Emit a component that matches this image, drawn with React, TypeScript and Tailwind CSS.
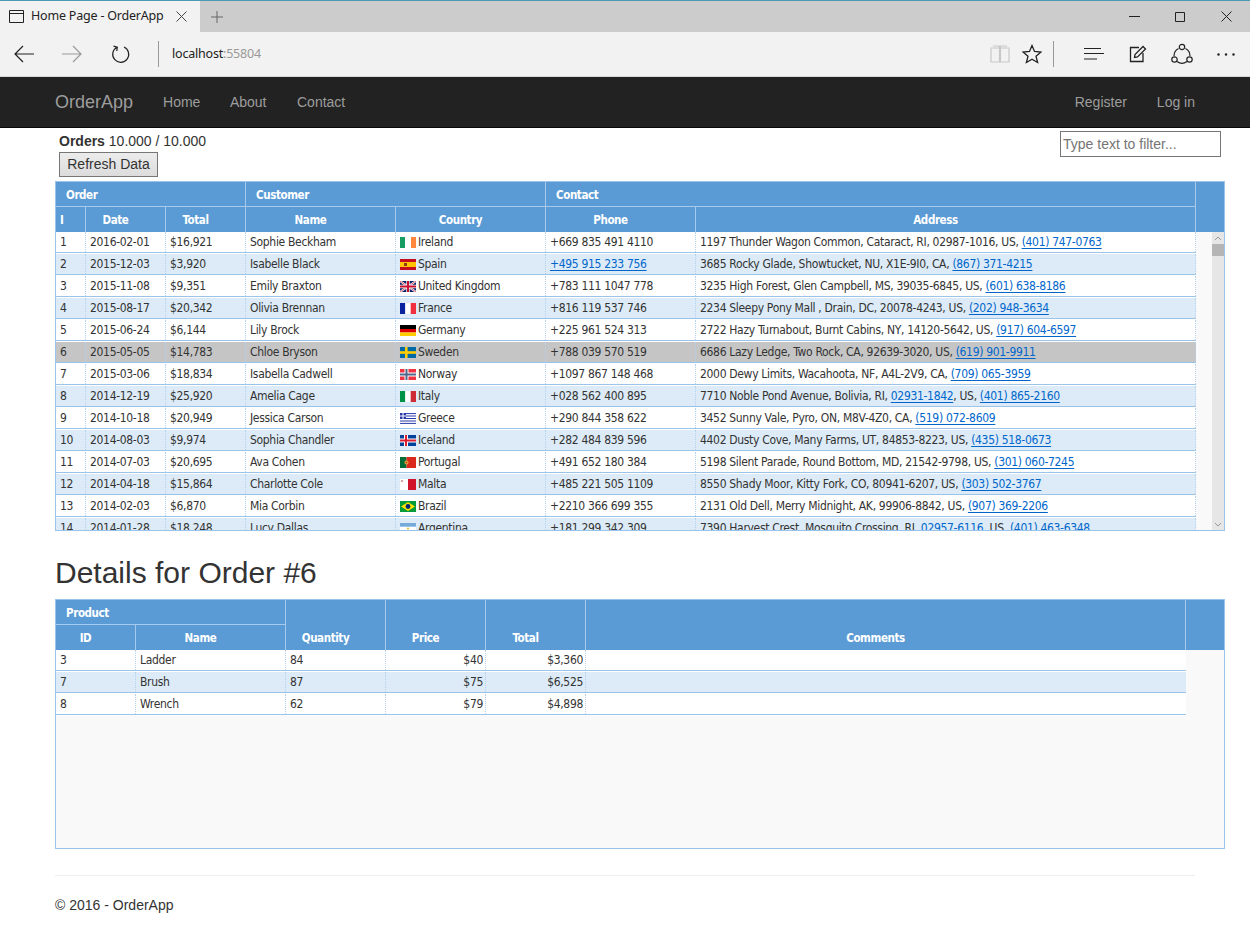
import React from 'react';

const ORDERS = [
  ['1', '2016-02-01', '$16,921', 'Sophie Beckham', 'ie', 'Ireland', '+669 835 491 4110', '1197 Thunder Wagon Common, Cataract, RI, 02987-1016, US, ', '(401) 747-0763'],
  ['2', '2015-12-03', '$3,920', 'Isabelle Black', 'es', 'Spain', '+495 915 233 756', '3685 Rocky Glade, Showtucket, NU, X1E-9I0, CA, ', '(867) 371-4215'],
  ['3', '2015-11-08', '$9,351', 'Emily Braxton', 'gb', 'United Kingdom', '+783 111 1047 778', '3235 High Forest, Glen Campbell, MS, 39035-6845, US, ', '(601) 638-8186'],
  ['4', '2015-08-17', '$20,342', 'Olivia Brennan', 'fr', 'France', '+816 119 537 746', '2234 Sleepy Pony Mall , Drain, DC, 20078-4243, US, ', '(202) 948-3634'],
  ['5', '2015-06-24', '$6,144', 'Lily Brock', 'de', 'Germany', '+225 961 524 313', '2722 Hazy Turnabout, Burnt Cabins, NY, 14120-5642, US, ', '(917) 604-6597'],
  ['6', '2015-05-05', '$14,783', 'Chloe Bryson', 'se', 'Sweden', '+788 039 570 519', '6686 Lazy Ledge, Two Rock, CA, 92639-3020, US, ', '(619) 901-9911'],
  ['7', '2015-03-06', '$18,834', 'Isabella Cadwell', 'no', 'Norway', '+1097 867 148 468', '2000 Dewy Limits, Wacahoota, NF, A4L-2V9, CA, ', '(709) 065-3959'],
  ['8', '2014-12-19', '$25,920', 'Amelia Cage', 'it', 'Italy', '+028 562 400 895', '7710 Noble Pond Avenue, Bolivia, RI, ', '02931-1842', ', US, ', '(401) 865-2160'],
  ['9', '2014-10-18', '$20,949', 'Jessica Carson', 'gr', 'Greece', '+290 844 358 622', '3452 Sunny Vale, Pyro, ON, M8V-4Z0, CA, ', '(519) 072-8609'],
  ['10', '2014-08-03', '$9,974', 'Sophia Chandler', 'is', 'Iceland', '+282 484 839 596', '4402 Dusty Cove, Many Farms, UT, 84853-8223, US, ', '(435) 518-0673'],
  ['11', '2014-07-03', '$20,695', 'Ava Cohen', 'pt', 'Portugal', '+491 652 180 384', '5198 Silent Parade, Round Bottom, MD, 21542-9798, US, ', '(301) 060-7245'],
  ['12', '2014-04-18', '$15,864', 'Charlotte Cole', 'mt', 'Malta', '+485 221 505 1109', '8550 Shady Moor, Kitty Fork, CO, 80941-6207, US, ', '(303) 502-3767'],
  ['13', '2014-02-03', '$6,870', 'Mia Corbin', 'br', 'Brazil', '+2210 366 699 355', '2131 Old Dell, Merry Midnight, AK, 99906-8842, US, ', '(907) 369-2206'],
  ['14', '2014-01-28', '$18,248', 'Lucy Dallas', 'ar', 'Argentina', '+181 299 342 309', '7390 Harvest Crest, Mosquito Crossing, RI, ', '02957-6116', ', US, ', '(401) 463-6348'],
];

const DETAILS = [
  ['3', 'Ladder', '84', '$40', '$3,360'],
  ['7', 'Brush', '87', '$75', '$6,525'],
  ['8', 'Wrench', '62', '$79', '$4,898'],
];

function Flag({ code }: { code: string }) {
  const body: Record<string, React.ReactNode> = {
    ie: <><rect width="5" height="11" fill="#169b62" /><rect x="5" width="6" height="11" fill="#fff" /><rect x="11" width="5" height="11" fill="#ff883e" /></>,
    es: <><rect width="16" height="11" fill="#c60b1e" /><rect y="3" width="16" height="5" fill="#ffc400" /><rect x="4" y="4" width="3" height="3" fill="#8d3a1a" /></>,
    gb: <><rect width="16" height="11" fill="#012169" /><path d="M0 0L16 11M16 0L0 11" stroke="#fff" strokeWidth="2" /><path d="M0 0L16 11M16 0L0 11" stroke="#c8102e" strokeWidth="0.7" /><path d="M8 0V11M0 5.5H16" stroke="#fff" strokeWidth="3.4" /><path d="M8 0V11M0 5.5H16" stroke="#c8102e" strokeWidth="2" /></>,
    fr: <><rect width="5.3" height="11" fill="#0a239e" /><rect x="5.3" width="5.4" height="11" fill="#fff" /><rect x="10.7" width="5.3" height="11" fill="#f0303f" /></>,
    de: <><rect width="16" height="4" fill="#000" /><rect y="4" width="16" height="3.5" fill="#dd0000" /><rect y="7.5" width="16" height="3.5" fill="#ffce00" /></>,
    se: <><rect width="16" height="11" fill="#006aa7" /><rect x="5" width="2.6" height="11" fill="#fecc00" /><rect y="4.2" width="16" height="2.6" fill="#fecc00" /></>,
    no: <><rect width="16" height="11" fill="#ef3340" /><rect x="4.5" width="4" height="11" fill="#fff" /><rect y="3.5" width="16" height="4" fill="#fff" /><rect x="5.5" width="2" height="11" fill="#53668c" /><rect y="4.5" width="16" height="2" fill="#53668c" /></>,
    it: <><rect width="5.3" height="11" fill="#009246" /><rect x="5.3" width="5.4" height="11" fill="#fff" /><rect x="10.7" width="5.3" height="11" fill="#ce2b37" /></>,
    gr: <><rect width="16" height="11" fill="#fff" /><path d="M0 .6H16M0 3H16M0 5.5H16M0 8H16M0 10.4H16" stroke="#2a3aa8" /><rect width="6" height="6" fill="#2a3aa8" /><path d="M3 0V6M0 3H6" stroke="#fff" /></>,
    is: <><rect width="16" height="11" fill="#02429b" /><rect x="4" width="4" height="11" fill="#fff" /><rect y="3.5" width="16" height="4" fill="#fff" /><rect x="5" width="2" height="11" fill="#dc1e35" /><rect y="4.5" width="16" height="2" fill="#dc1e35" /></>,
    pt: <><rect width="6.5" height="11" fill="#046a38" /><rect x="6.5" width="9.5" height="11" fill="#da291c" /><circle cx="6.5" cy="5.5" r="2" fill="#e8b33a" /><circle cx="6.5" cy="5.5" r="1" fill="#c0392b" /></>,
    mt: <><rect width="8" height="11" fill="#fff" /><rect x="8" width="8" height="11" fill="#cf142b" /><rect x="1" y="1" width="2" height="2" fill="#d8a0a0" /></>,
    br: <><rect width="16" height="11" fill="#009b3a" /><path d="M8 1L15 5.5L8 10L1 5.5Z" fill="#fedf00" /><circle cx="8" cy="5.5" r="2.4" fill="#002776" /></>,
    ar: <><rect width="16" height="11" fill="#75aadb" /><rect y="3.7" width="16" height="3.6" fill="#fff" /><circle cx="8" cy="5.5" r="1" fill="#f6b40e" /></>,
  };
  return (
    <svg width="16" height="11" viewBox="0 0 16 11" className="shrink-0">
      {body[code]}
    </svg>
  );
}

function Phone({ children }: { children: React.ReactNode }) {
  return <span className="text-[#0066cc] underline underline-offset-2">{children}</span>;
}

// cell of a data row, dotted divider on the right
function Cell({ className, children }: { className: string; children?: React.ReactNode }) {
  return (
    <div className={`${className} h-full flex items-center pl-[4px] pr-[2px] border-r border-dotted border-[#b4d2ee] whitespace-nowrap overflow-hidden`}>
      {children}
    </div>
  );
}

const headText = 'font-bold text-white text-[11.5px] tracking-[-0.4px]';

function Head({ className, children }: { className: string; children?: React.ReactNode }) {
  return (
    <div className={`${className} h-full flex items-center justify-center pr-[20px] pt-[3px] border-r border-[#a6c9ec] ${headText}`}>
      {children}
    </div>
  );
}

function Group({ className, children }: { className: string; children?: React.ReactNode }) {
  return (
    <div className={`${className} h-full flex items-center pl-[10px] pt-[3px] border-r border-b border-[#a6c9ec] ${headText}`}>
      {children}
    </div>
  );
}

function HeadLow({ className, children }: { className: string; children?: React.ReactNode }) {
  return (
    <div className={`${className} h-full flex flex-col justify-end items-center pr-[20px] pb-[3px] border-r border-[#a6c9ec] ${headText}`}>
      {children}
    </div>
  );
}

function rowBg(i: number, selected: boolean) {
  if (selected) return 'bg-[#c5c5c5]';
  return i % 2 === 1 ? 'bg-[#dcebf7]' : 'bg-white';
}

const gridFont = "text-[12px] tracking-[-0.32px] text-[#333] font-['DejaVu_Sans',sans-serif] font-stretch-condensed";

function OrdersGrid() {
  return (
    <div className={`w-[1170px] h-[350px] border border-[#9cc3e8] overflow-hidden bg-[#f9f9f9] ${gridFont}`}>
      <div className="bg-[#5b9bd5]">
        <div className="h-[25px] flex">
          <Group className="w-[190px]">Order</Group>
          <Group className="w-[300px]">Customer</Group>
          <Group className="w-[650px]">Contact</Group>
        </div>
        <div className="h-[25px] flex">
          <div className={`w-[30px] h-full flex items-center pl-1 pt-[3px] border-r border-[#a6c9ec] ${headText}`}>I</div>
          <Head className="w-[80px]">Date</Head>
          <Head className="w-[80px]">Total</Head>
          <Head className="w-[150px]">Name</Head>
          <Head className="w-[150px]">Country</Head>
          <Head className="w-[150px]">Phone</Head>
          <Head className="w-[500px]">Address</Head>
        </div>
      </div>
      <div className="flex h-[298px] overflow-hidden">
        <div className="w-[1140px] shrink-0">
          {ORDERS.map((o, i) => (
            <div key={o[0]} className="h-[22px] bg-white">
              <div className={`h-[21px] flex border-b border-[#9cc3e8] ${rowBg(i, o[0] === '6')}`}>
                <Cell className="w-[30px]">{o[0]}</Cell>
                <Cell className="w-[80px]">{o[1]}</Cell>
                <Cell className="w-[80px]">{o[2]}</Cell>
                <Cell className="w-[150px]">{o[3]}</Cell>
                <Cell className="w-[150px]">
                  <Flag code={o[4]} />
                  <span className="ml-[2px]">{o[5]}</span>
                </Cell>
                <Cell className="w-[150px]">{o[0] === '2' ? <Phone>{o[6]}</Phone> : o[6]}</Cell>
                <Cell className="w-[500px]">
                  <span className="whitespace-pre">{o[7]}</span>
                  <Phone>{o[8]}</Phone>
                  {o[9] && <span className="whitespace-pre">{o[9]}</span>}
                  {o[10] && <Phone>{o[10]}</Phone>}
                </Cell>
              </div>
            </div>
          ))}
        </div>
        <div className="w-[12px] ml-auto bg-[#e6e6e6] flex flex-col items-center justify-between">
          <div className="w-full">
            <div className="h-3 flex items-center justify-center">
              <svg width="8" height="5" viewBox="0 0 8 5" fill="none" stroke="#9a9a9a"><path d="M1 4L4 1L7 4" /></svg>
            </div>
            <div className="h-3 bg-[#b5b5b5]" />
          </div>
          <div className="h-3 w-full flex items-center justify-center">
            <svg width="8" height="5" viewBox="0 0 8 5" fill="none" stroke="#9a9a9a"><path d="M1 1L4 4L7 1" /></svg>
          </div>
        </div>
      </div>
    </div>
  );
}

function DetailsGrid() {
  return (
    <div className={`w-[1170px] h-[250px] border border-[#9cc3e8] bg-[#f9f9f9] ${gridFont}`}>
      <div className="h-[50px] flex bg-[#5b9bd5]">
        <div className="w-[230px] flex flex-col">
          <div className={`h-[25px] flex items-center pl-[10px] pt-[3px] border-r border-b border-[#a6c9ec] ${headText}`}>Product</div>
          <div className="h-[25px] flex">
            <Head className="w-[80px]">ID</Head>
            <Head className="w-[150px]">Name</Head>
          </div>
        </div>
        <HeadLow className="w-[100px]">Quantity</HeadLow>
        <HeadLow className="w-[100px]">Price</HeadLow>
        <HeadLow className="w-[100px]">Total</HeadLow>
        <HeadLow className="w-[600px]">Comments</HeadLow>
      </div>
      {DETAILS.map((d, i) => (
        <div key={d[0]} className="h-[22px] w-[1130px] bg-white">
          <div className={`h-[21px] flex border-b border-[#9cc3e8] ${rowBg(i, false)}`}>
            <Cell className="w-[80px]">{d[0]}</Cell>
            <Cell className="w-[150px]">{d[1]}</Cell>
            <Cell className="w-[100px]">{d[2]}</Cell>
            <Cell className="w-[100px] justify-end">{d[3]}</Cell>
            <Cell className="w-[100px] justify-end">{d[4]}</Cell>
            <div className="w-[600px]" />
          </div>
        </div>
      ))}
    </div>
  );
}

function BrowserChrome() {
  return (
    <div className="font-['Noto_Sans','Open_Sans',sans-serif]">
      <div className="h-[32px] flex bg-[#cccccc] border-t border-[#4b9ab5]">
        <div className="w-[200px] bg-[#f2f2f2] flex items-center pl-[9px] text-[12.5px] tracking-[-0.2px] text-[#222]">
          <svg width="15" height="13" viewBox="0 0 15 13" fill="none" stroke="#222"><path d="M.5.5H14.5V12.5H.5ZM.5 3.5H14.5" /></svg>
          <span className="ml-[7px] w-[133px] whitespace-nowrap">Home Page - OrderApp</span>
          <svg className="ml-[12px]" width="11" height="11" viewBox="0 0 11 11" fill="none" stroke="#444"><path d="M.5.5L10.5 10.5M10.5.5L.5 10.5" /></svg>
        </div>
        <div className="ml-[11px] flex items-center">
          <svg width="12" height="12" viewBox="0 0 12 12" fill="none" stroke="#666"><path d="M6 0V12M0 6H12" /></svg>
        </div>
        <div className="ml-auto flex items-center h-full">
          <svg className="mr-[35px]" width="11" height="1" viewBox="0 0 11 1"><rect width="11" height="1" fill="#222" /></svg>
          <svg className="mr-[36px]" width="10" height="10" viewBox="0 0 10 10" fill="none" stroke="#222"><path d="M.5.5H9.5V9.5H.5Z" /></svg>
          <svg className="mr-[18px]" width="11" height="11" viewBox="0 0 11 11" fill="none" stroke="#222"><path d="M.5.5L10.5 10.5M10.5.5L.5 10.5" /></svg>
        </div>
      </div>
      <div className="h-[45px] bg-[#f2f2f2] border-b border-[#d9d9d9] flex items-center">
        <svg className="ml-[14px]" width="21" height="18" viewBox="0 0 21 18" fill="none" stroke="#222" strokeWidth="1.2"><path d="M20 9H1M9 1L1 9L9 17" /></svg>
        <svg className="ml-[27px]" width="21" height="18" viewBox="0 0 21 18" fill="none" stroke="#9a9a9a" strokeWidth="1.2"><path d="M0 9H19M11 1L19 9L11 17" /></svg>
        <svg className="ml-[28px]" width="20" height="20" viewBox="0 0 20 20" fill="none" stroke="#222" strokeWidth="1.2"><path d="M6 3.2A8 8 0 1 0 13 3M2.5 2.2L6.3 3.2L5.8 7" /></svg>
        <div className="ml-[27px] w-px h-[26px] bg-[#999]" />
        <div className="ml-[13px] text-[12.5px] tracking-[-0.2px] text-[#222]">localhost<span className="text-[#999]">:55804</span></div>
        <div className="ml-auto flex items-center">
          <svg width="20" height="20" viewBox="0 0 20 20" fill="none" stroke="#c8c8c8" strokeWidth="1.2"><path d="M1 4H9.5V18H1ZM10.5 4H19V18H10.5ZM3 2H9.5V4M17 2H10.5V4" /></svg>
          <svg className="ml-[12px]" width="20" height="20" viewBox="0 0 20 20" fill="none" stroke="#222" strokeWidth="1.3"><path d="M10 1.5L12.5 7.5L19 8L14 12.2L15.6 18.5L10 15.2L4.4 18.5L6 12.2L1 8L7.5 7.5Z" /></svg>
          <div className="ml-[11px] w-px h-[26px] bg-[#999]" />
          <svg className="ml-[30px]" width="20" height="14" viewBox="0 0 20 14" fill="none" stroke="#222" strokeWidth="1.2"><path d="M0 1.5H17M0 6.5H20M0 12H13" /></svg>
          <svg className="ml-[25px]" width="18" height="18" viewBox="0 0 18 18" fill="none" stroke="#222" strokeWidth="1.3"><path d="M14 8V16.5H1.5V2.5H10" /><path d="M5.5 12.5L6 9.5L14 1.5L16.5 4L8.5 12Z" /></svg>
          <svg className="ml-[24px]" width="22" height="22" viewBox="0 0 22 22" fill="none" stroke="#222" strokeWidth="1.2"><path d="M7.5 5.5A8.5 8.5 0 0 0 3 13M14.5 5.5A8.5 8.5 0 0 1 19 13M6 18.5A8.5 8.5 0 0 0 16 18.5" /><circle cx="11" cy="4" r="2.7" /><circle cx="3.5" cy="16.5" r="2.7" /><circle cx="18.5" cy="16.5" r="2.7" /></svg>
          <svg className="ml-[24px] mr-[15px]" width="18" height="3" viewBox="0 0 18 3" fill="#222"><circle cx="1.5" cy="1.5" r="1.2" /><circle cx="9" cy="1.5" r="1.2" /><circle cx="16.5" cy="1.5" r="1.2" /></svg>
        </div>
      </div>
    </div>
  );
}

export default function App() {
  return (
    <div className="min-h-screen bg-white text-[#333] text-[14px] font-['Liberation_Sans',Arial,sans-serif]">
      <BrowserChrome />

      <nav className="h-[51px] bg-[#222222] border-b border-[#080808] flex items-center pl-[55px] pr-[55px] text-[#9d9d9d]">
        <span className="text-[18px] mr-[30px]">OrderApp</span>
        <span className="mr-[29.5px]">Home</span>
        <span className="mr-[30.5px]">About</span>
        <span>Contact</span>
        <span className="ml-auto mr-[30px]">Register</span>
        <span>Log in</span>
      </nav>

      <div className="pl-[55px] pr-[25px]">
        <div className="h-[53px] flex justify-between pl-1 pr-[4px]">
          <div className="pt-[4px]">
            <div className="leading-[18px]"><b>Orders</b> 10.000 / 10.000</div>
            <button className="mt-[2px] w-[99px] h-[25px] bg-gradient-to-b from-[#ececec] to-[#dcdcdc] border border-[#767676] text-[#333] text-[14px]">Refresh Data</button>
          </div>
          <input
            className="mt-[3px] w-[161px] h-[26px] border border-[#767676] px-[2px] text-[14px] placeholder:text-[#757575] outline-none"
            placeholder="Type text to filter..."
          />
        </div>

        <OrdersGrid />

        <h2 className="mt-[25px] mb-[10px] text-[30px] leading-[33px] text-[#333]">Details for Order #6</h2>

        <DetailsGrid />

        <hr className="mt-[26px] w-[1140px] border-[#eeeeee]" />
        <footer className="mt-[19px]">© 2016 - OrderApp</footer>
      </div>
    </div>
  );
}
